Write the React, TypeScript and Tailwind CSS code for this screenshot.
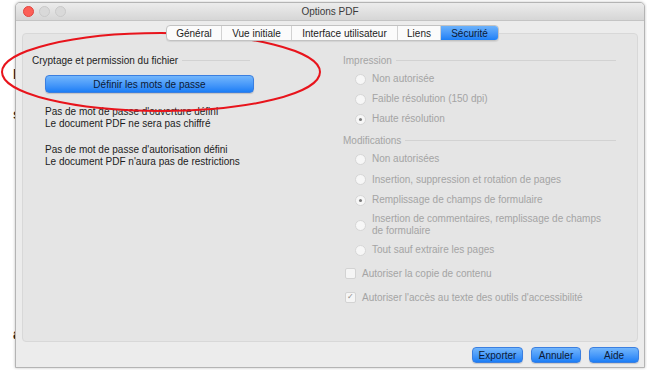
import React from "react";

// Options PDF — onglet Sécurité (macOS Aqua)

const tabs = ["Général", "Vue initiale", "Interface utilisateur", "Liens", "Sécurité"];

function Radio({ label, checked = false }: { label: React.ReactNode; checked?: boolean }) {
  return (
    <div className="flex items-center gap-[6px] pl-[12px]">
      <span className="flex h-[11px] w-[11px] shrink-0 items-center justify-center rounded-full border border-[#d6d6d6] bg-[#f7f7f7]">
        {checked && <span className="h-[3px] w-[3px] rounded-full bg-[#7a7a7a]" />}
      </span>
      <span className="leading-[12px]">{label}</span>
    </div>
  );
}

function Check({ label, checked = false }: { label: string; checked?: boolean }) {
  return (
    <div className="flex h-[20px] items-center gap-[6px] pl-[2px]">
      <span className="flex h-[11px] w-[11px] shrink-0 items-center justify-center rounded-[2px] border border-[#d3d3d3] bg-[#f5f5f5] text-[8px] leading-none text-[#8a8a8a]">
        {checked ? "✓" : ""}
      </span>
      <span>{label}</span>
    </div>
  );
}

function GroupLabel({ text, width }: { text: string; width: string }) {
  return (
    <div className={`flex h-[12px] items-center gap-[4px] ${width}`}>
      <span className="shrink-0">{text}</span>
      <span className="h-px flex-1 bg-[#d2d2d2]" />
    </div>
  );
}

function BlueButton({ children, className = "" }: { children: React.ReactNode; className?: string }) {
  return (
    <div
      className={`flex items-center justify-center rounded-[4px] border border-[#3b7fe0] bg-gradient-to-b from-[#72b6fc] to-[#1a7ef6] text-[#0b1a36] shadow-[0_1px_1px_rgba(0,0,0,0.15)] ${className}`}
    >
      {children}
    </div>
  );
}

export default function App() {
  return (
    <div className="relative flex h-[370px] w-[647px] overflow-hidden bg-white font-['Liberation_Sans',Arial,sans-serif] text-[10px] text-[#1c1c1c]">
      {/* fragments of the document behind */}
      <div className="flex w-[15px] shrink-0 flex-col overflow-hidden pl-[13px] text-[14px] font-bold leading-[14px] text-[#222]">
        <span className="mt-[67px]">L</span>
        <span className="mt-[26px]">s</span>
        <span className="mt-[206px]">a</span>
      </div>

      {/* window */}
      <div className="mt-[2px] flex h-[366px] w-[630px] shrink-0 flex-col overflow-hidden rounded-t-[5px] border border-[#b4b4b4] bg-[#ececec] shadow-[0_0_3px_rgba(0,0,0,0.25)]">
        {/* title bar */}
        <div className="grid h-[18px] shrink-0 grid-cols-[1fr_auto_1fr] items-center border-b border-[#c4c4c4] bg-gradient-to-b from-[#ececec] to-[#d6d6d6]">
          <div className="flex items-center gap-[5px] pl-[7px]">
            <span className="h-[11px] w-[11px] rounded-full border border-[#e1453f] bg-[#fc5f57]" />
            <span className="h-[11px] w-[11px] rounded-full border border-[#c9c9c9] bg-[#d9d9d9]" />
            <span className="h-[11px] w-[11px] rounded-full border border-[#c9c9c9] bg-[#d9d9d9]" />
          </div>
          <span className="text-[10px] text-[#3a3a3a]">Options PDF</span>
          <div />
        </div>

        {/* tabs */}
        <div className="relative z-10 mt-[4px] flex justify-center pl-[5px]">
          <div className="flex h-[16px] overflow-hidden rounded-[4px] border border-[#c2c2c2] bg-[#fbfbfb] shadow-[0_1px_1px_rgba(0,0,0,0.08)]">
            {tabs.map((t, i) => (
              <div
                key={t}
                className={
                  t === "Sécurité"
                    ? "flex w-[57px] items-center justify-center bg-gradient-to-b from-[#6cb2fb] to-[#1b7ff6] text-[#0b1a36]"
                    : `flex items-center justify-center border-r border-[#d2d2d2] text-[#222] ${
                        ["w-[55px]", "w-[70px]", "w-[106px]", "w-[43px]"][i]
                      }`
                }
              >
                {t}
              </div>
            ))}
          </div>
        </div>

        {/* group box */}
        <div className="mx-[6px] -mt-[8px] flex h-[309px] shrink-0 rounded-[4px] border border-[#d8d8d8] bg-[#e5e5e5] pt-[20px]">
          {/* left column */}
          <div className="flex w-[320px] shrink-0 flex-col pl-[9px]">
            <GroupLabel text="Cryptage et permission du fichier" width="w-[218px]" />
            <BlueButton className="ml-[13px] mt-[9px] h-[18px] w-[209px]">Définir les mots de passe</BlueButton>
            <div className="ml-[13px] mt-[13px] leading-[12px]">
              <div>Pas de mot de passe d'ouverture défini</div>
              <div>Le document PDF ne sera pas chiffré</div>
            </div>
            <div className="ml-[13px] mt-[14px] leading-[12px]">
              <div>Pas de mot de passe d'autorisation défini</div>
              <div>Le document PDF n'aura pas de restrictions</div>
            </div>
          </div>

          {/* right column */}
          <div className="flex flex-col text-[#a4a4a4]">
            <GroupLabel text="Impression" width="w-[273px]" />
            <div className="mt-[3px] flex flex-col">
              <div className="flex h-[20px] items-center"><Radio label="Non autorisée" /></div>
              <div className="flex h-[20px] items-center"><Radio label="Faible résolution (150 dpi)" /></div>
              <div className="flex h-[20px] items-center"><Radio label="Haute résolution" checked /></div>
            </div>
            <div className="mt-[5px]">
              <GroupLabel text="Modifications" width="w-[273px]" />
            </div>
            <div className="mt-[3px] flex flex-col">
              <div className="flex h-[20px] items-center"><Radio label="Non autorisées" /></div>
              <div className="flex h-[21px] items-center"><Radio label="Insertion, suppression et rotation de pages" /></div>
              <div className="flex h-[20px] items-center"><Radio label="Remplissage de champs de formulaire" checked /></div>
              <div className="flex h-[30px] items-center">
                <Radio
                  label={
                    <>
                      Insertion de commentaires, remplissage de champs
                      <br />
                      de formulaire
                    </>
                  }
                />
              </div>
              <div className="flex h-[20px] items-center"><Radio label="Tout sauf extraire les pages" /></div>
            </div>
            <div className="mt-[3px]">
              <Check label="Autoriser la copie de contenu" />
            </div>
            <div className="mt-[4px]">
              <Check label="Autoriser l'accès au texte des outils d'accessibilité" checked />
            </div>
          </div>
        </div>

        {/* bottom buttons */}
        <div className="mt-[5px] flex justify-end gap-[8px] pr-[5px]">
          <BlueButton className="h-[16px] w-[51px]">Exporter</BlueButton>
          <BlueButton className="h-[16px] w-[50px]">Annuler</BlueButton>
          <BlueButton className="h-[16px] w-[50px]">Aide</BlueButton>
        </div>
      </div>

      {/* hand-drawn annotation */}
      <svg className="pointer-events-none absolute left-0 top-0" width="647" height="370">
        <ellipse cx="161" cy="72" rx="159" ry="39" fill="none" stroke="#e8141c" strokeWidth="2" />
      </svg>
    </div>
  );
}
